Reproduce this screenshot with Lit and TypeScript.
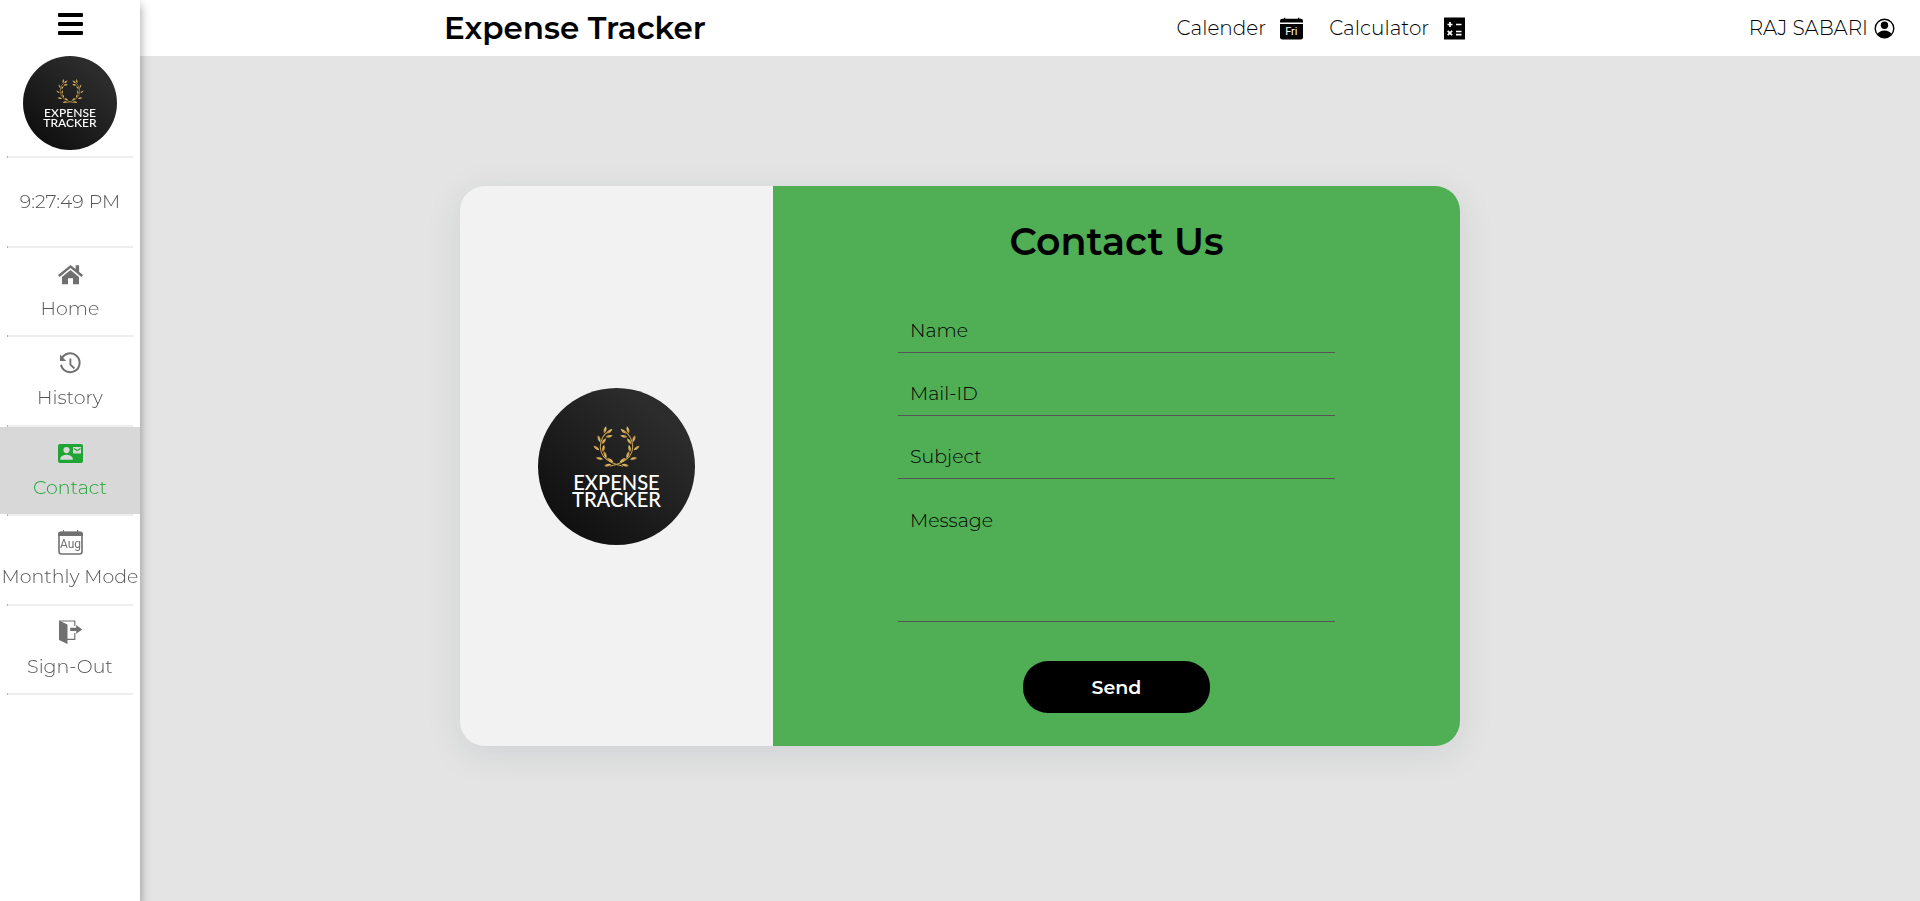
import { LitElement, html, css, svg } from "lit";
import { customElement, property } from "lit/decorators.js";
import { classMap } from "lit/directives/class-map.js";

const icons = {
  bars: svg`<rect x="0" y="1" width="25" height="4" rx="1"/><rect x="0" y="10" width="25" height="4" rx="1"/><rect x="0" y="19" width="25" height="4" rx="1"/>`,
  home: svg`<path d="M12.5 3 17.7 7V3.2h3.4v6.6l3.9 3.2-1.6 2L12.5 6 1.6 15 0 13z"/><path d="M12.5 8 21 15v7.3h-6v-6.1h-5v6.1H4V15z"/>`,
  history: svg`<path d="M3.6 8A9.4 9.4 0 1 1 3 13.700" fill="none" stroke="currentColor" stroke-width="2"/><path d="M2 3.500v6.600h6.200z"/><path d="M12.400 7.500v6.200l4 3.800" fill="none" stroke="currentColor" stroke-width="1.800"/>`,
  contact: svg`<path fill-rule="evenodd" d="M2 3h21a2 2 0 0 1 2 2v15a2 2 0 0 1-2 2H2a2 2 0 0 1-2-2V5a2 2 0 0 1 2-2zM8.5 6a3.1 3.1 0 1 0 0 6.2 3.1 3.1 0 0 0 0-6.2zM2.3 18.8h12.5v-1c0-2.6-4.200-4-6.300-4s-6.200 1.400-6.200 4zM15 6v6.500h8V6z"/><path d="m16 7.500 3 2h.5l3-2" fill="none" stroke="currentColor" stroke-width="1.200"/>`,
  month: svg`<rect x="1" y="2.500" width="23" height="21.500" rx="2.500" fill="none" stroke="currentColor" stroke-width="1.600"/><path d="M0 6V4q0-2.500 2.500-2.500H5V0h1v1.500h13V0h1.200v1.500h2.300Q25 1.500 25 4v2z"/><text class="glyph" x="12.500" y="18" text-anchor="middle" font-size="12">Aug</text>`,
  signout: svg`<path d="M1 .5 9.500 4.500V24L1 20z"/><path d="M1.500 1h15.300v5M16.800 13v6.300H9" fill="none" stroke="currentColor" stroke-width="1.200"/><path d="M12.200 7.800h6V5l6 4.400-6 4.400v-2.800h-6z"/>`,
  day: svg`<path d="M0 5.500V4q0-2.200 2.200-2.200H4V.8h1.300v1H18v-1h1.300v1h1.500Q23 1.800 23 4v1.500z"/><path d="M0 6.900h23v13.300q0 2.300-2.300 2.300H2.300Q0 22.500 0 20.200z"/><text class="glyph light" x="11.300" y="18.300" text-anchor="middle" font-size="11">Fri</text>`,
  calc: svg`<rect x="1" y=".5" width="21" height="22" rx=".5"/><path d="M4.500 7.500h5M7 5v5M13 7.500h5.500M4.700 13.800l4.400 4.400M9.100 13.800l-4.400 4.400M13 14.500h5.500M13 17.700h5.500" stroke="#fff" stroke-width="1.700" fill="none"/>`,
  user: svg`<circle cx="11.500" cy="11.500" r="9.300" fill="none" stroke="currentColor" stroke-width="1.400"/><circle cx="11.500" cy="8.300" r="3.700"/><path d="M4.600 17q2-3.500 6.900-3.500t6.900 3.500q-2.600 4-6.900 4t-6.900-4z"/>`,
};

const leaves = [
  [254, 179, -75], [267, 183, -38], [266, 198, -12], [236, 205, 72],
  [250, 213, -55], [228, 233, 38], [249, 234, -80], [237, 264, 12],
  [254, 253, 68], [269, 269, 32], [262, 284, -14],
];

@customElement("tracker-logo")
class TrackerLogo extends LitElement {
  static styles = css`
    :host { display: block; border-radius: 50%; overflow: hidden; }
    .art { display: block; width: 100%; height: auto; }
    .word { font-family: Lato, sans-serif; font-size: 20px; font-weight: 500; fill: #fff; text-anchor: middle; }
    .stem { fill: none; stroke: #c8a44e; stroke-width: 3; }
  `;
  branch() {
    return svg`<path class="stem" d="M308 287Q268 280 249 258Q231 232 247 201Q254 190 262 184"/>
      ${leaves.map(
        ([x, y, r]) =>
          svg`<path fill="url(#gold)" d="M-11 0Q-2-8 11 0Q-2 8-11 0z" transform="translate(${x} ${y}) rotate(${r})"/>`
      )}`;
  }
  render() {
    return html`<svg class="art" viewBox="0 0 156 156" role="img" aria-label="Expense Tracker logo">
      <defs>
        <linearGradient id="dark" x1="0.200" y1="0.900" x2="0.800" y2="0.200">
          <stop offset="0" stop-color="#101010" /><stop offset="1" stop-color="#2c2c2c" />
        </linearGradient>
        <linearGradient id="gold"><stop offset="0" stop-color="#b57c30" /><stop offset="1" stop-color="#ecd77c" /></linearGradient>
      </defs>
      <rect width="156" height="156" fill="url(#dark)" />
      <g transform="translate(-18 -18) scale(0.3333)">
        <g>${this.branch()}</g>
        <g transform="translate(576 0) scale(-1 1)">${this.branch()}</g>
      </g>
      <text class="word" x="78" y="101">EXPENSE</text>
      <text class="word" x="78" y="118">TRACKER</text>
    </svg>`;
  }
}

@customElement("app-root")
class AppRoot extends LitElement {
  @property() active = "Contact";

  static styles = css`
    :host {
      display: grid;
      grid-template-columns: 140px 1fr;
      grid-template-rows: 56px 1fr;
      min-height: 100vh;
      background: #e4e4e4;
      color: #000;
      font-family: Montserrat, Inter, sans-serif;
      font-size: 19px;
      font-weight: 300;
    }
    * { box-sizing: border-box; }
    a { color: inherit; text-decoration: none; }
    button, input, textarea { font: inherit; color: inherit; border: 0; margin: 0; background: none; }
    .icon { display: block; fill: currentColor; flex: none; }
    .glyph { font-family: Roboto, sans-serif; font-weight: 400; }
    .light { fill: #fff; }

    .sidebar {
      grid-row: 1 / 3;
      z-index: 1;
      will-change: transform;
      display: flex;
      flex-direction: column;
      background: #fff;
      color: #555;
      box-shadow: 0 5px 10px rgba(0, 0, 0, 0.4);
    }
    .toggle { height: 56px; padding: 0 0 7px; display: grid; place-items: center; color: #000; cursor: pointer; }
    .brand { width: 94px; margin: 0 auto 6px; }
    .rule { width: 126px; height: 2px; margin: 0 auto; border: 0; border-left: 1px solid #b4b4b4; background: #eee; }
    .entries { list-style: none; margin: 0; padding: 0; min-height: 537px; display: grid; grid-auto-rows: 1fr; }
    .entry { display: flex; flex-direction: column; }
    .link { flex: 1; display: flex; flex-direction: column; align-items: center; justify-content: center; gap: 10px; line-height: 24px; white-space: nowrap; }
    .link .icon { color: #707070; }
    .active, .active .icon { color: #1fa534; }
    .active { background: #d8d8d8; }

    .topbar { display: flex; align-items: center; padding: 0 24px 0 304px; background: #fff; font-size: 20px; }
    .title { flex: 5 0 auto; margin: 0; font-size: 31px; line-height: 40px; font-weight: 600; }
    .tools { display: flex; gap: 26px; }
    .tool { display: flex; align-items: center; gap: 14px; }
    .user { flex: 3 0 auto; display: flex; align-items: center; justify-content: flex-end; gap: 5px; }

    .page { display: grid; justify-items: center; align-content: center; padding: 0 140px 25px 0; }
    .card {
      width: 100%;
      max-width: 1000px;
      display: grid;
      grid-template-columns: 313fr 687fr;
      border-radius: 25px;
      overflow: hidden;
      box-shadow: 0 8px 36px rgba(30, 50, 70, 0.1);
    }
    .side { display: grid; place-items: center; background: #f2f2f2; }
    .side-logo { width: 157px; }
    .form { display: flex; flex-direction: column; gap: 18px; padding: 32px 125px 33px; background: #50ae55; }
    .heading { margin: 0 0 24px; text-align: center; font-size: 38px; line-height: 48px; font-weight: 600; }
    .field { display: block; width: 100%; height: 45px; padding: 0 12px; border-bottom: 1px solid #555; border-radius: 0; outline: none; }
    .field::placeholder { color: #000; opacity: 1; }
    .message { height: 125px; padding: 12px; line-height: 24px; resize: none; }
    .send { align-self: center; margin-top: 21px; width: 187px; height: 52px; border-radius: 25px; background: #000; color: #fff; font-weight: 600; cursor: pointer; }
  `;

  icon(name: keyof typeof icons, size = 25) {
    return html`<svg class="icon" width=${size} height=${size} viewBox="0 0 ${size} ${size}" aria-hidden="true">${icons[name]}</svg>`;
  }

  entry(label: string, name: keyof typeof icons) {
    return html`<li class="entry">
      <a class=${classMap({ link: true, active: label === this.active })} href="#">${this.icon(name)}<span>${label}</span></a>
      <hr class="rule" />
    </li>`;
  }

  render() {
    return html`
      <aside class="sidebar">
        <button class="toggle" aria-label="Toggle menu">${this.icon("bars")}</button>
        <tracker-logo class="brand"></tracker-logo>
        <hr class="rule" />
        <ul class="entries">
          <li class="entry"><time class="link">9:27:49 PM</time><hr class="rule" /></li>
          ${this.entry("Home", "home")} ${this.entry("History", "history")} ${this.entry("Contact", "contact")}
          ${this.entry("Monthly Mode", "month")} ${this.entry("Sign-Out", "signout")}
        </ul>
      </aside>
      <header class="topbar">
        <h1 class="title">Expense Tracker</h1>
        <nav class="tools">
          <a class="tool" href="#">Calender ${this.icon("day", 23)}</a>
          <a class="tool" href="#">Calculator ${this.icon("calc", 23)}</a>
        </nav>
        <a class="user" href="#">RAJ SABARI ${this.icon("user", 23)}</a>
      </header>
      <main class="page">
        <section class="card">
          <div class="side"><tracker-logo class="side-logo"></tracker-logo></div>
          <form class="form">
            <h2 class="heading">Contact Us</h2>
            <input class="field" type="text" placeholder="Name" aria-label="Name" />
            <input class="field" type="email" placeholder="Mail-ID" aria-label="Mail-ID" />
            <input class="field" type="text" placeholder="Subject" aria-label="Subject" />
            <textarea class="field message" placeholder="Message" aria-label="Message"></textarea>
            <button class="send" type="button">Send</button>
          </form>
        </section>
      </main>
    `;
  }
}
